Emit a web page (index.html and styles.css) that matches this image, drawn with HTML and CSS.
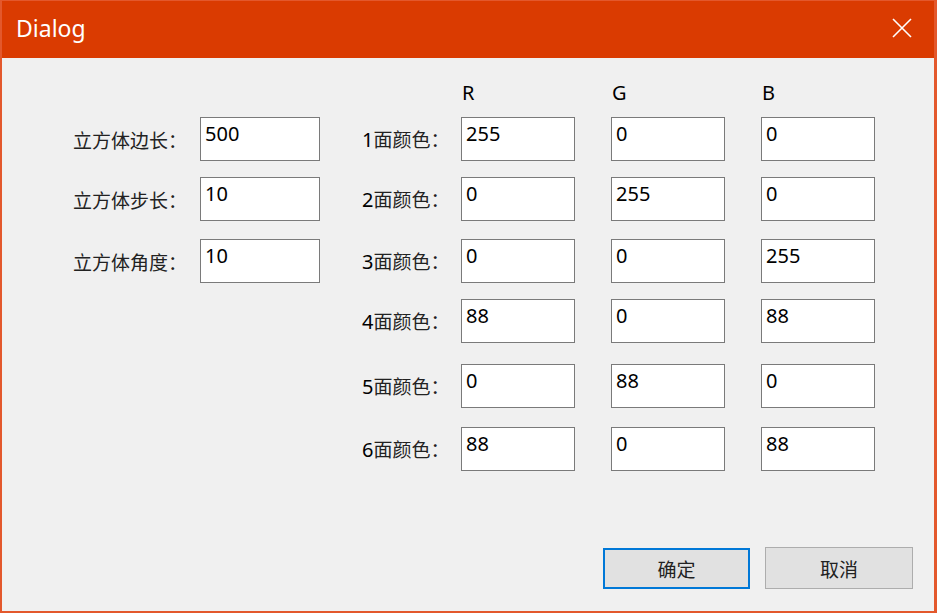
FILE: index.html
```html
<!DOCTYPE html>
<html lang="zh-CN">
<head>
<meta charset="utf-8">
<title>Dialog</title>
<link rel="stylesheet" href="styles.css">
</head>
<body>
<div class="window">
  <div class="titlebar">
    <span class="title">Dialog</span>
    <svg class="close" width="20" height="20" viewBox="0 0 20 20">
      <path d="M1 1 L19 19 M19 1 L1 19" stroke="#fff" stroke-width="1.6" fill="none"/>
    </svg>
  </div>
  <div class="content">
    <div class="row head">
      <span class="col-r">R</span>
      <span class="col-g">G</span>
      <span class="col-b">B</span>
    </div>
    <div class="row r1">
      <label class="lbl-left">立方体边长：</label>
      <div class="box box-left">500</div>
      <label class="lbl-right"><span class="num">1</span>面颜色：</label>
      <div class="box">255</div>
      <div class="box">0</div>
      <div class="box">0</div>
    </div>
    <div class="row r2">
      <label class="lbl-left">立方体步长：</label>
      <div class="box box-left">10</div>
      <label class="lbl-right"><span class="num">2</span>面颜色：</label>
      <div class="box">0</div>
      <div class="box">255</div>
      <div class="box">0</div>
    </div>
    <div class="row r3">
      <label class="lbl-left">立方体角度：</label>
      <div class="box box-left">10</div>
      <label class="lbl-right"><span class="num">3</span>面颜色：</label>
      <div class="box">0</div>
      <div class="box">0</div>
      <div class="box">255</div>
    </div>
    <div class="row r4">
      <label class="lbl-right"><span class="num">4</span>面颜色：</label>
      <div class="box">88</div>
      <div class="box">0</div>
      <div class="box">88</div>
    </div>
    <div class="row r5">
      <label class="lbl-right"><span class="num">5</span>面颜色：</label>
      <div class="box">0</div>
      <div class="box">88</div>
      <div class="box">0</div>
    </div>
    <div class="row r6">
      <label class="lbl-right"><span class="num">6</span>面颜色：</label>
      <div class="box">88</div>
      <div class="box">0</div>
      <div class="box">88</div>
    </div>
  </div>
  <div class="buttons">
    <button class="btn btn-default">确定</button>
    <button class="btn">取消</button>
  </div>
</div>
</body>
</html>
```

FILE: styles.css
```css
html, body {
  margin: 0;
  padding: 0;
}
body {
  width: 937px;
  height: 613px;
  overflow: hidden;
  font-family: "Noto Sans", "Noto Sans CJK SC", sans-serif;
}
.window {
  box-sizing: border-box;
  width: 937px;
  height: 613px;
  background: #f0f0f0;
  border-style: solid;
  border-color: #e3582c;
  border-width: 1px 3px 2px 2px;
  display: flex;
  flex-direction: column;
}
.titlebar {
  height: 57px;
  background: #da3b01;
  display: flex;
  align-items: center;
  justify-content: space-between;
  padding: 0 22px 0 14px;
  flex: none;
}
.title {
  color: #fff;
  font-size: 23px;
  line-height: 1;
  margin-top: -2px;
}
.close {
  display: block;
  margin-top: -3px;
}
.content {
  flex: 1;
  padding-top: 25px;
}
.row {
  display: grid;
  grid-template-columns: 70px 128px 120px 42px 99px 114px 36px 114px 36px 114px;
  height: 44px;
  align-items: center;
}
.row > .box:nth-of-type(1) { grid-column: 6; }
.row > .box:nth-of-type(2) { grid-column: 8; }
.row > .box:nth-of-type(3) { grid-column: 10; }
.row > .box-left:nth-of-type(1) { grid-column: 3; }
.row > .box-left ~ .box:nth-of-type(2) { grid-column: 6; }
.row > .box-left ~ .box:nth-of-type(3) { grid-column: 8; }
.row > .box-left ~ .box:nth-of-type(4) { grid-column: 10; }

.head {
  height: 20px;
  font-size: 20px;
  color: #000;
}
.head span { line-height: 20px; padding-left: 1px; }
.col-r { grid-column: 6; }
.col-g { grid-column: 8; }
.col-b { grid-column: 10; }

.r1 { margin-top: 14px; }
.r2 { margin-top: 16px; }
.r3 { margin-top: 18px; }
.r4 { margin-top: 16px; }
.r5 { margin-top: 21px; }
.r6 { margin-top: 19px; }

.lbl-left, .lbl-right {
  font-size: 19px;
  color: #222;
  font-family: "Noto Sans CJK SC", sans-serif;
  white-space: nowrap;
  line-height: 1;
  margin-top: 1px;
}
.lbl-left { grid-column: 2; margin-left: 1px; }
.lbl-right { grid-column: 5; }
.num {
  font-family: "Noto Sans", sans-serif;
  font-size: 20px;
  color: #000;
}
.box {
  box-sizing: border-box;
  height: 44px;
  background: #fff;
  border: 1px solid #7a7a7a;
  font-size: 20px;
  line-height: 24px;
  padding: 4px 0 0 4px;
  color: #000;
  align-self: stretch;
}
.buttons {
  display: flex;
  justify-content: flex-end;
  gap: 15px;
  padding: 0 21px 22px 0;
}
.btn {
  box-sizing: border-box;
  width: 148px;
  height: 42px;
  background: #e1e1e1;
  border: 1px solid #adadad;
  font-family: "Noto Sans CJK SC", sans-serif;
  font-size: 19px;
  color: #222;
  padding: 0;
  margin: 0;
}
.btn-default {
  width: 147px;
  height: 41px;
  border: 2px solid #0078d7;
  margin-top: 1px;
}
```
